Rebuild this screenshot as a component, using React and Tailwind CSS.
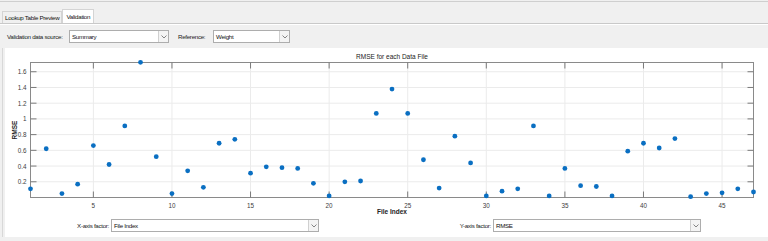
import React from "react";

const data = [0.11,0.62,0.05,0.17,0.66,0.42,0.91,1.72,0.52,0.05,0.34,0.13,0.69,0.74,0.31,0.39,0.38,0.37,0.18,0.02,0.20,0.21,1.07,1.38,1.07,0.48,0.12,0.78,0.44,0.02,0.08,0.11,0.91,0.02,0.37,0.15,0.14,0.02,0.59,0.69,0.63,0.75,0.01,0.05,0.06,0.11,0.07];

const X0 = 30.5, X1 = 753.5, Y0 = 197.5, YT = 62.5;
const xs = (i) => X0 + (i - 1) * (X1 - X0) / 46;
const ys = (v) => Y0 - v * 78.6;

function Select({ value, w }) {
  return (
    <div className={`flex h-[13px] shrink-0 items-stretch border border-[#adadad] bg-white ${w}`}>
      <div className="flex-1 whitespace-nowrap pl-[2px] text-[6.2px] leading-[11px] tracking-[-0.3px] text-[#111]">{value}</div>
      <div className="flex w-[10px] items-center justify-center border-l border-[#d0d0d0] bg-[#f4f4f4]">
        <svg width="6" height="4" viewBox="0 0 6 4"><path d="M0.5 0.5 L3 3 L5.5 0.5" fill="none" stroke="#777" strokeWidth="0.9" /></svg>
      </div>
    </div>
  );
}

function Chart() {
  const yt = [0.2,0.4,0.6,0.8,1,1.2,1.4,1.6];
  const xt = [5,10,15,20,25,30,35,40,45];
  return (
    <svg width="763" height="168" viewBox="5 48 763 168" style={{ fontFamily: "'Liberation Sans', Arial, sans-serif" }}>
      {yt.map((v) => (
        <line key={"gy"+v} x1={X0} x2={X1} y1={ys(v)} y2={ys(v)} stroke="#ebebeb" strokeWidth="1" />
      ))}
      {xt.map((v) => (
        <line key={"gx"+v} x1={xs(v)} x2={xs(v)} y1={YT} y2={Y0} stroke="#ebebeb" strokeWidth="1" />
      ))}
      <rect x={X0} y={YT} width={X1 - X0} height={Y0 - YT} fill="none" stroke="#8a8a8a" strokeWidth="1" />
      {yt.map((v) => (
        <g key={"ty"+v}>
          <line x1={X0} x2={X0 + 6} y1={ys(v)} y2={ys(v)} stroke="#7a7a7a" />
          <line x1={X1 - 6} x2={X1} y1={ys(v)} y2={ys(v)} stroke="#7a7a7a" />
          <text x={X0 - 4} y={ys(v) + 2.5} fontSize="6.3" textAnchor="end" fill="#404040">{v === 1 ? "1" : v.toFixed(1)}</text>
        </g>
      ))}
      {xt.map((v) => (
        <g key={"tx"+v}>
          <line x1={xs(v)} x2={xs(v)} y1={Y0} y2={Y0 - 6} stroke="#7a7a7a" />
          <line x1={xs(v)} x2={xs(v)} y1={YT} y2={YT + 6} stroke="#7a7a7a" />
          <text x={xs(v)} y={Y0 + 10} fontSize="6.3" textAnchor="middle" fill="#404040">{v}</text>
        </g>
      ))}
      {data.map((v, i) => (
        <circle key={i} cx={xs(i + 1)} cy={ys(v)} r="2.4" fill="#0a6fc2" />
      ))}
      <text x={392} y={59} fontSize="6.5" textAnchor="middle" fill="#222">RMSE for each Data File</text>
      <text x={392} y={214} fontSize="6.5" fontWeight="bold" textAnchor="middle" fill="#222">File Index</text>
      <text x={0} y={0} fontSize="6.5" fontWeight="bold" textAnchor="middle" fill="#222" transform="translate(17 130) rotate(-90)">RMSE</text>
    </svg>
  );
}

export default function App() {
  const lbl = "whitespace-nowrap text-[6.2px] tracking-[-0.3px] text-[#222]";
  return (
    <div className="h-[241px] w-[768px] overflow-hidden bg-[#f0f0f0]" style={{ fontFamily: "'Liberation Sans', Arial, sans-serif" }}>
      <div className="mt-[1px] h-[9px] border-t border-[#cfcfcf]" />
      <div className="flex h-[14px] items-end border-b border-[#c9c9c9]">
        <div className="ml-[2px] flex h-[12px] items-center whitespace-nowrap border border-b-0 border-[#d4d4d4] bg-[#f0f0f0] px-[2px] text-[6.2px] tracking-[-0.3px] text-[#111]">Lookup Table Preview</div>
        <div className="flex h-[14px] items-center whitespace-nowrap border border-b-0 border-[#d4d4d4] bg-white px-[3px] text-[6.2px] tracking-[-0.3px] text-[#111]">Validation</div>
      </div>
      <div className="flex h-[24px] items-center border-t border-white pl-[7px]">
        <span className={`w-[62px] shrink-0 ${lbl}`}>Validation data source:</span>
        <Select value="Summary" w="w-[100px]" />
        <span className={`ml-[9px] w-[35px] shrink-0 ${lbl}`}>Reference:</span>
        <Select value="Weight" w="w-[77px]" />
      </div>
      <div className="ml-[2px] h-[189px] border-l border-[#d8d8d8] pl-[2px]">
        <div className="h-full bg-white">
          <Chart />
          <div className="flex items-center pt-[3px]">
            <span className={`w-[106px] shrink-0 pr-[2px] text-right ${lbl}`}>X-axis factor:</span>
            <Select value="File Index" w="w-[208px]" />
            <span className={`w-[174px] shrink-0 pr-[2px] text-right ${lbl}`}>Y-axis factor:</span>
            <Select value="RMSE" w="w-[208px]" />
          </div>
        </div>
      </div>
    </div>
  );
}
